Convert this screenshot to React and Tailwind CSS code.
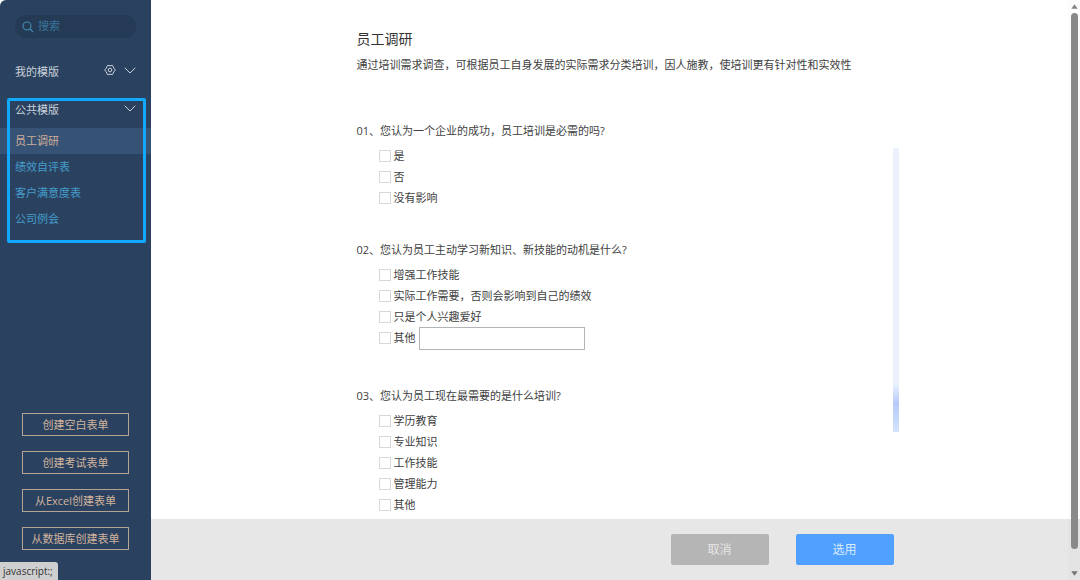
import React, { useState } from "react";

const publicTemplates = ["员工调研", "绩效自评表", "客户满意度表", "公司例会"];

const createActions = [
  "创建空白表单",
  "创建考试表单",
  "从Excel创建表单",
  "从数据库创建表单",
];

const questions = [
  {
    id: "01",
    title: "您认为一个企业的成功，员工培训是必需的吗?",
    options: [{ label: "是" }, { label: "否" }, { label: "没有影响" }],
  },
  {
    id: "02",
    title: "您认为员工主动学习新知识、新技能的动机是什么?",
    options: [
      { label: "增强工作技能" },
      { label: "实际工作需要，否则会影响到自己的绩效" },
      { label: "只是个人兴趣爱好" },
      { label: "其他", input: true },
    ],
  },
  {
    id: "03",
    title: "您认为员工现在最需要的是什么培训?",
    options: [
      { label: "学历教育" },
      { label: "专业知识" },
      { label: "工作技能" },
      { label: "管理能力" },
      { label: "其他" },
    ],
  },
];

const SearchIcon = () => (
  <svg width="12" height="12" viewBox="0 0 12 12" fill="none" stroke="currentColor" strokeWidth="1.1" className="shrink-0">
    <circle cx="5" cy="5" r="4" />
    <path d="M8 8 L11.2 11.2" />
  </svg>
);

// Hexagonal settings icon
const SettingsIcon = () => (
  <svg width="12" height="12" viewBox="0 0 24 24" fill="none" stroke="currentColor" strokeWidth="2">
    <path d="M7.5 2.5 Q12 5 16.5 2.5 L18.6 6 Q18.8 9 23 12 Q18.8 15 18.6 18 L16.5 21.5 Q12 19 7.5 21.5 L5.4 18 Q5.2 15 1 12 Q5.2 9 5.4 6 Z" />
    <circle cx="12" cy="12" r="3.6" />
  </svg>
);

const ChevronIcon = () => (
  <svg width="12" height="7" viewBox="0 0 12 7" fill="none" stroke="currentColor" strokeWidth="1">
    <path d="M0.7 0.7 L6 6 L11.3 0.7" />
  </svg>
);

const Sidebar = ({ selected, onSelect }) => (
  <aside className="relative flex w-[151px] shrink-0 flex-col rounded-tl-md bg-[#2a4260]">
    {/* Search */}
    <label className="mx-[15px] mt-[15px] flex h-[23px] items-center gap-1 rounded-full bg-[#253a54] px-[7px] text-[#3f8fb5]">
      <SearchIcon />
      <input
        type="text"
        aria-label="搜索"
        placeholder="搜索"
        className="w-full min-w-0 bg-transparent text-[11px] outline-none placeholder:text-[#38759a]"
      />
    </label>

    {/* My templates */}
    <div className="mt-[22px] flex h-6 items-center px-[15px] text-[#c9d1da]">
      <h2 className="flex-1">我的模版</h2>
      <div className="flex items-center gap-2 pb-1">
        <button type="button" aria-label="设置">
          <SettingsIcon />
        </button>
        <button type="button" aria-label="展开我的模版">
          <ChevronIcon />
        </button>
      </div>
    </div>

    {/* Public templates */}
    <section className="relative mt-[14px] pb-[11px]">
      <div className="flex h-6 items-center px-[15px] text-[#c9d1da]">
        <h2 className="flex-1">公共模版</h2>
        <div className="flex items-center pb-1">
          <button type="button" aria-label="展开公共模版">
            <ChevronIcon />
          </button>
        </div>
      </div>
      <ul className="mt-[6px]">
        {publicTemplates.map((name) => (
          <li key={name}>
            <button
              type="button"
              onClick={() => onSelect(name)}
              className={
                name === selected
                  ? "h-[26px] w-full bg-[#365375] px-[15px] text-left text-[#d0ad98]"
                  : "h-[26px] w-full px-[15px] text-left text-[#459dcb]"
              }
            >
              {name}
            </button>
          </li>
        ))}
      </ul>
      <div className="pointer-events-none absolute inset-y-0 right-[5px] left-[7px] rounded-[2px] border-3 border-[#12a8fb]" />
    </section>

    {/* Create buttons */}
    <div className="mt-auto mb-[30px] flex flex-col gap-[15px] px-[22px]">
      {createActions.map((action) => (
        <button
          key={action}
          type="button"
          className="h-[23px] border border-[#b5a493] pt-px text-center whitespace-nowrap text-[#d2b49d]"
        >
          {action}
        </button>
      ))}
    </div>

    {/* Link status */}
    <div className="absolute bottom-0 left-0 h-[18px] rounded-tr-[3px] bg-[#cfcfcf] pr-[5px] pl-[3px] text-[10px] leading-[18px] text-[#333]">
      javascript:;
    </div>
  </aside>
);

const Question = ({ question }) => (
  <fieldset className="mb-8">
    <legend className="mb-1 h-5 leading-5">
      {question.id}、{question.title}
    </legend>
    {question.options.map((option) => (
      <div key={option.label} className="flex items-start pl-[22px] leading-[21px]">
        <label className="flex items-center gap-[3px]">
          <input
            type="checkbox"
            className="size-[12px] appearance-none border border-[#d8d8d8] bg-white checked:bg-[#50a0ff]"
          />
          {option.label}
        </label>
        {option.input && (
          <input
            type="text"
            aria-label="其他动机"
            className="mb-1 ml-[3px] h-[23px] w-[166px] border border-[#b4b4b4] px-1 outline-none"
          />
        )}
      </div>
    ))}
  </fieldset>
);

const App = () => {
  const [selected, setSelected] = useState("员工调研");

  return (
    <div className="relative flex h-screen overflow-hidden bg-white font-['Open_Sans','Noto_Sans_CJK_SC',sans-serif] text-[11px] text-[#404040]">
      <Sidebar selected={selected} onSelect={setSelected} />

      <main className="flex min-w-0 flex-1 flex-col">
        <div className="min-h-0 flex-1 overflow-hidden pr-[10px]">
          <div className="mx-auto flex max-w-[576px] flex-col pt-[29px] pl-[34px]">
            <h1 className="text-[14px] leading-5 text-[#333]">{selected}</h1>
            <p className="mt-[6px] leading-5">
              通过培训需求调查，可根据员工自身发展的实际需求分类培训，因人施教，使培训更有针对性和实效性
            </p>
            <div className="mt-[46px] flex">
              <form className="flex-1">
                {questions.map((question) => (
                  <Question key={question.id} question={question} />
                ))}
              </form>
              <div className="mt-[27px] h-[284px] w-[6px] bg-[#ecf1fe]">
                <div className="mt-[236px] h-12 bg-linear-to-b from-[#ecf1fe] via-[#b5cbfa] via-40% to-[#d3e2fd]" />
              </div>
            </div>
          </div>
        </div>

        {/* Footer */}
        <footer className="h-[61px] shrink-0 bg-[#e7e7e7] pr-[10px]">
          <div className="mx-auto flex h-full max-w-[576px] items-center justify-end gap-[27px] pr-[5px] text-[12px]">
            <button type="button" className="h-[31px] w-[98px] rounded-[2px] bg-[#b5b5b5] text-[#e6e6e6]">
              取消
            </button>
            <button type="button" className="h-[31px] w-[98px] rounded-[2px] bg-[#50a0ff] text-[#dcecff]">
              选用
            </button>
          </div>
        </footer>
      </main>

      {/* Page scrollbar */}
      <div className="absolute inset-y-0 right-0 flex w-[12px] flex-col items-center bg-black/1 py-1">
        <svg width="7" height="5" viewBox="0 0 7 5" fill="#858585">
          <path d="M3.5 0.3 L6.7 4.7 H0.3 Z" />
        </svg>
        <div className="mt-1 mb-[22px] w-[7px] flex-1 rounded-full bg-[#898989]" />
        <svg width="7" height="5" viewBox="0 0 7 5" fill="#737373">
          <path d="M3.5 4.7 L6.7 0.3 H0.3 Z" />
        </svg>
      </div>
    </div>
  );
};

export default App;
